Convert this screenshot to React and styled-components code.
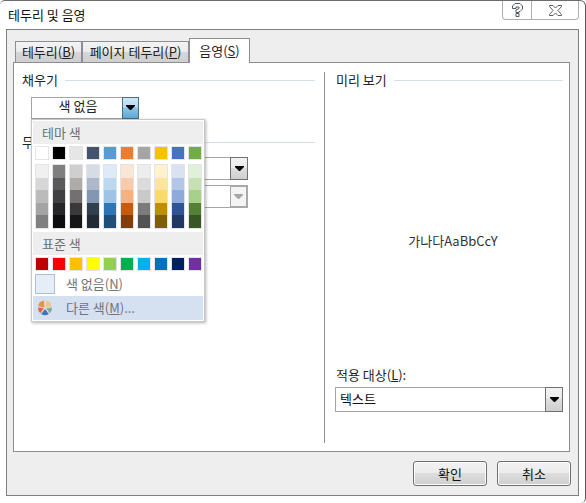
import React from "react";
import styled, { createGlobalStyle } from "styled-components";

const THEME_COLORS = ["#ffffff", "#000000", "#e7e6e6", "#44546a", "#5b9bd5", "#ed7d31", "#a5a5a5", "#ffc000", "#4472c4", "#70ad47"];
const STANDARD_COLORS = ["#c00000", "#ff0000", "#ffc000", "#ffff00", "#92d050", "#00b050", "#00b0f0", "#0070c0", "#002060", "#7030a0"];
const SHADES = [
  ["#f0f0f0", "#d7d7d7", "#bbbbbb", "#a4a4a4", "#7f7f7f"],
  ["#7f7f7f", "#595959", "#404040", "#262626", "#0d0d0d"],
  ["#d0cece", "#aeabab", "#757070", "#3a3838", "#171616"],
  ["#d6dce4", "#adb9ca", "#8497b0", "#323f4f", "#222a35"],
  ["#deebf6", "#bdd7ee", "#9dc3e6", "#2e75b5", "#1f4e79"],
  ["#fbe5d5", "#f8cbad", "#f4b183", "#c55a11", "#833c0b"],
  ["#ededed", "#dbdbdb", "#c9c9c9", "#7b7b7b", "#525252"],
  ["#fff2cc", "#fee599", "#ffd965", "#bf8f00", "#7f6000"],
  ["#d9e2f3", "#b4c6e7", "#8eaadb", "#2f5496", "#1f3864"],
  ["#e2efd9", "#c5e0b3", "#a8d08d", "#538135", "#375623"],
];

function Arrow({ color = "#000" }) {
  return (
    <svg width="9" height="5" viewBox="0 0 9 5">
      <path d="M0 0H9V1L5 5H4L0 1Z" fill={color} />
    </svg>
  );
}

function HelpIcon() {
  return (
    <svg width="11" height="14" viewBox="0 0 11 14">
      <path
        d="M3 .5H8L10.5 3V6L8 8.5H7V9.500H4V7L7 5.500V4H4V5.500H.5V3ZM4 10.500H7V13.500H4Z"
        fill="#fff"
        stroke="#555b66"
      />
    </svg>
  );
}

function CloseIcon() {
  return (
    <svg width="13" height="11" viewBox="0 0 13 11">
      <path
        d="M.5 .5H4L6.500 3L9 .5H12.500V1.500L9 5.500L12.500 9.500V10.500H9L6.500 8L4 10.500H.5V9.500L4 5.500L.5 1.500Z"
        fill="#fff"
        stroke="#555b66"
      />
    </svg>
  );
}

function PieIcon() {
  return (
    <svg width="16" height="16" viewBox="0 0 16 16">
      <path d="M7.400 7.400L1.200 6.200A7 7 0 0 1 7 .5Z" fill="#e98f4f" />
      <path d="M8.600 7.400L9 .5A7 7 0 0 1 14.800 6.200Z" fill="#efc78e" />
      <path d="M9.200 8.300L15 7.600A7 7 0 0 1 12.700 13.200Z" fill="#85ab91" />
      <path d="M8 9L11.800 14A7 7 0 0 1 4.200 14Z" fill="#3f72c0" />
      <path d="M6.800 8.300L3.300 13.200A7 7 0 0 1 1 7.600Z" fill="#d9694b" />
    </svg>
  );
}

export default function App() {
  return (
    <>
      <GlobalStyle />
      <Dialog>
        <TitleBar>
          <Title>테두리 및 음영</Title>
          <Caption>
            <CaptionButton $width={28}>
              <HelpIcon />
            </CaptionButton>
            <CaptionButton $width={47}>
              <CloseIcon />
            </CaptionButton>
          </Caption>
        </TitleBar>
        <Panel>
          <Tabs>
            <Tab $width={67}>
              테두리(<Key>B</Key>)
            </Tab>
            <Tab $width={107}>
              페이지 테두리(<Key>P</Key>)
            </Tab>
            <Tab $width={61} $active>
              음영(<Key>S</Key>)
            </Tab>
          </Tabs>
          <TabBody>
            <LeftColumn>
              <GroupHeader>
                <span>채우기</span>
              </GroupHeader>
              <FillPicker>
                <FillValue>색 없음</FillValue>
                <DropButton $hot $width={17}>
                  <Arrow />
                </DropButton>
                <Popup>
                  <PopupHeader>테마 색</PopupHeader>
                  <SwatchRow>
                    {THEME_COLORS.map((c) => (
                      <Swatch key={c} $color={c} />
                    ))}
                  </SwatchRow>
                  <ShadeGrid>
                    {SHADES.map((col, i) => (
                      <ShadeColumn key={i}>
                        {col.map((c) => (
                          <Shade key={c} $color={c} />
                        ))}
                      </ShadeColumn>
                    ))}
                  </ShadeGrid>
                  <StandardHeader>표준 색</StandardHeader>
                  <SwatchRow>
                    {STANDARD_COLORS.map((c) => (
                      <Swatch key={c} $color={c} />
                    ))}
                  </SwatchRow>
                  <NoColorRow>
                    <NoColorBox />
                    <MenuLabel>
                      색 없음(<Key>N</Key>)
                    </MenuLabel>
                  </NoColorRow>
                  <MoreRow>
                    <PieSlot>
                      <PieIcon />
                    </PieSlot>
                    <MenuLabel>
                      다른 색(<Key>M</Key>)...
                    </MenuLabel>
                  </MoreRow>
                </Popup>
              </FillPicker>
              <PatternHeader>
                <span>무늬</span>
              </PatternHeader>
              <PatternCombos>
                <PatternCombo>
                  <DropButton $dark $width={18}>
                    <Arrow />
                  </DropButton>
                </PatternCombo>
                <PatternCombo>
                  <DropButton $disabled $width={18}>
                    <Arrow color="#a6a6a6" />
                  </DropButton>
                </PatternCombo>
              </PatternCombos>
            </LeftColumn>
            <RightColumn>
              <GroupHeader>
                <span>미리 보기</span>
              </GroupHeader>
              <Preview>가나다AaBbCcY</Preview>
              <ApplyLabel>
                적용 대상(<Key>L</Key>):
              </ApplyLabel>
              <ApplyCombo>
                <ApplyValue>텍스트</ApplyValue>
                <DropButton $dark $width={18}>
                  <Arrow />
                </DropButton>
              </ApplyCombo>
            </RightColumn>
          </TabBody>
          <Footer>
            <PushButton>확인</PushButton>
            <PushButton>취소</PushButton>
          </Footer>
        </Panel>
      </Dialog>
    </>
  );
}

const GlobalStyle = createGlobalStyle`
  html, body {
    margin: 0;
    padding: 0;
    background: #fff;
  }

  * {
    box-sizing: border-box;
  }
`;

const Dialog = styled.div`
  width: 586px;
  height: 503px;
  display: flex;
  flex-direction: column;
  padding: 0 6px 7px 6px;

  background: #fff;
  border-top: 1px solid #6b6b6b;
  border-right: 1px solid #5a5a5a;
  border-top-left-radius: 5px;
  border-top-right-radius: 6px;
  border-bottom-right-radius: 5px;

  font-family: "Noto Sans CJK KR", "Noto Sans", sans-serif;
  font-size: 13px;
  line-height: 16px;
  color: #222;
`;

const TitleBar = styled.div`
  height: 28px;
  display: flex;
  justify-content: space-between;
  align-items: flex-start;
`;

const Title = styled.div`
  margin: 6px 0 0 2px;
  color: #111;
`;

const Caption = styled.div`
  height: 19px;
  display: flex;
  background: #fff;
  border: 1px solid #aab0b6;
  border-top: none;
  border-radius: 0 0 4px 4px;
`;

const CaptionButton = styled.div`
  width: ${(props) => props.$width}px;
  display: flex;
  justify-content: center;
  align-items: center;

  & + & {
    border-left: 1px solid #aab0b6;
  }
`;

const Panel = styled.div`
  flex: 1;
  display: flex;
  flex-direction: column;
  padding: 8px 8px 0 6px;

  background: #eeeeee;
  border: 1px solid #7f7f7f;
`;

const Tabs = styled.div`
  height: 25px;
  display: flex;
  align-items: flex-end;
  gap: 0;
  padding-left: 2px;
  margin-bottom: -1px;
  position: relative;
  z-index: 1;
`;

const Tab = styled.div`
  width: ${(props) => props.$width}px;
  height: ${(props) => (props.$active ? 25 : 22)}px;
  display: flex;
  justify-content: center;
  align-items: center;

  background: ${(props) => (props.$active ? "#fff" : "linear-gradient(#f3f3f3 0%, #ebebeb 50%, #d6d6d6 51%, #cfcfcf 100%)")};
  border: 1px solid #8c8e94;
  border-bottom: ${(props) => (props.$active ? "none" : "1px solid #8c8e94")};
`;

const Key = styled.span`
  text-decoration: underline;
`;

const TabBody = styled.div`
  height: 390px;
  display: flex;
  padding: 9px 6px 8px 8px;

  background: #fff;
  border: 1px solid #8c8e94;
`;

const LeftColumn = styled.div`
  width: 302px;
  padding-right: 9px;
`;

const RightColumn = styled.div`
  flex: 1;
  display: flex;
  flex-direction: column;
  padding: 0 0 31px 10px;
  border-left: 1px solid #8f9196;
`;

const GroupHeader = styled.div`
  height: 16px;
  display: flex;
  align-items: center;
  gap: 7px;
  color: #222;

  &::after {
    content: "";
    flex: 1;
    height: 1px;
    background: #d6dfe6;
  }

  ${RightColumn} > & {
    padding-left: 1px;
  }
`;

const FillPicker = styled.div`
  position: relative;
  width: 108px;
  height: 22px;
  margin: 9px 0 0 9px;
  display: flex;
  border: 1px solid #a5a5a5;
  background: #fff;
`;

const FillValue = styled.div`
  flex: 1;
  text-align: center;
  padding-left: 2px;
`;

const DropButton = styled.div`
  width: ${(props) => props.$width}px;
  display: flex;
  flex-shrink: 0;
  justify-content: center;
  align-items: center;
  padding-bottom: 1px;
  margin-left: auto;

  ${(props) =>
    props.$hot &&
    `
    margin: -1px -1px -1px 0;
    border: 1px solid #4f6b80;
    background: linear-gradient(#cfe6f6 0%, #b4d9f0 45%, #8cc5e8 50%, #5fa7d4 100%);
  `}

  ${(props) =>
    props.$dark &&
    `
    margin: -1px -1px -1px auto;
    border: 1px solid #707070;
    background: linear-gradient(#f2f2f2 0%, #ebebeb 45%, #dddddd 50%, #cfcfcf 100%);
  `}

  ${(props) =>
    props.$disabled &&
    `
    margin: -1px -1px -1px auto;
    border: 2px solid #a8a8a8;
    border-left-width: 1px;
    background: #f4f4f4;
  `}
`;

const Popup = styled.div`
  position: absolute;
  top: 21px;
  left: -1px;
  z-index: 2;
  width: 174px;
  height: 203px;
  padding: 1px;

  background: #fff;
  border: 1px solid #c8c8c8;
  box-shadow: 1px 1px 3px rgba(0, 0, 0, 0.3);
  color: #7a7a7a;
`;

const PopupHeader = styled.div`
  height: 23px;
  padding-left: 9px;
  display: flex;
  align-items: center;
  background: #eeeeee;
  color: #6f6f6f;
`;

const StandardHeader = styled(PopupHeader)`
  margin-top: 3px;
`;

const SwatchRow = styled.div`
  display: flex;
  gap: 3px;
  margin: 2px 0 0 2px;
`;

const Swatch = styled.div`
  width: 14px;
  height: 14px;
  background: ${(props) => props.$color};
  border: 1px solid #e2e4e7;
`;

const ShadeGrid = styled(SwatchRow)`
  margin-top: 4px;
`;

const ShadeColumn = styled.div`
  width: 14px;
  height: 65px;
  display: flex;
  flex-direction: column;
  border: 1px solid #e2e4e7;
`;

const Shade = styled.div`
  flex: 1;
  background: ${(props) => props.$color};
`;

const NoColorRow = styled.div`
  height: 20px;
  margin-top: 3px;
  padding-left: 2px;
  display: flex;
  align-items: center;
  gap: 11px;
`;

const NoColorBox = styled.div`
  width: 20px;
  height: 20px;
  background: #e6edf7;
  border: 1px solid #a9c0e0;
`;

const MenuLabel = styled.div`
  color: #747474;
`;

const MoreRow = styled.div`
  height: 24px;
  margin-top: 2px;
  display: flex;
  align-items: center;
  background: #d5e0f1;
`;

const PieSlot = styled.div`
  width: 33px;
  padding-left: 4px;
  display: flex;
  align-items: center;
`;

const PatternHeader = styled(GroupHeader)`
  margin-top: 15px;
`;

const PatternCombos = styled.div`
  display: flex;
  flex-direction: column;
  gap: 5px;
  margin: 7px 0 0 9px;
`;

const PatternCombo = styled.div`
  width: 217px;
  height: 23px;
  display: flex;
  background: #fff;
  border: 1px solid #a5a5a5;
`;

const Preview = styled.div`
  flex: 1;
  padding: 27px 0 0 8px;
  display: flex;
  justify-content: center;
  align-items: center;
  color: #333;
`;

const ApplyLabel = styled.div`
  padding-left: 1px;
  height: 16px;
`;

const ApplyCombo = styled.div`
  height: 25px;
  margin-top: 4px;
  display: flex;
  background: #fff;
  border: 1px solid #a5a5a5;
`;

const ApplyValue = styled.div`
  flex: 1;
  padding: 3px 0 0 4px;
  color: #111;
`;

const Footer = styled.div`
  flex: 1;
  display: flex;
  justify-content: flex-end;
  align-items: flex-start;
  gap: 10px;
  padding: 9px 0 0;
  margin-right: -1px;
`;

const PushButton = styled.div`
  width: 74px;
  height: 25px;
  display: flex;
  justify-content: center;
  align-items: center;

  background: linear-gradient(#f2f2f2 0%, #ebebeb 48%, #dddddd 50%, #cfcfcf 100%);
  border: 1px solid #707070;
  border-radius: 3px;
  box-shadow: inset 0 0 0 1px #fcfcfc;
  color: #111;
`;
